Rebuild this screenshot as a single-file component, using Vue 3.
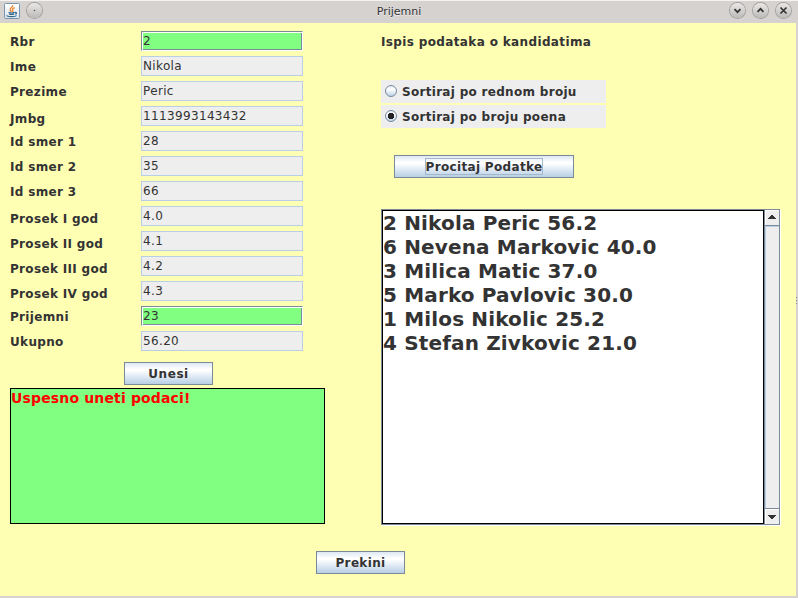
<script setup>
import { ref } from 'vue'

const fields = [
  { label: 'Rbr', value: '2', active: true },
  { label: 'Ime', value: 'Nikola' },
  { label: 'Prezime', value: 'Peric' },
  { label: 'Jmbg', value: '1113993143432', low: true },
  { label: 'Id smer 1', value: '28' },
  { label: 'Id smer 2', value: '35' },
  { label: 'Id smer 3', value: '66' },
  { label: 'Prosek I god', value: '4.0', low: true },
  { label: 'Prosek II god', value: '4.1', low: true },
  { label: 'Prosek III god', value: '4.2', low: true },
  { label: 'Prosek IV god', value: '4.3', low: true },
  { label: 'Prijemni', value: '23', active: true },
  { label: 'Ukupno', value: '56.20' },
]
const sorts = ['Sortiraj po rednom broju', 'Sortiraj po broju poena']
const selected = ref(1)
const candidates = [
  '2 Nikola Peric 56.2',
  '6 Nevena Markovic 40.0',
  '3 Milica Matic 37.0',
  '5 Marko Pavlovic 30.0',
  '1 Milos Nikolic 25.2',
  '4 Stefan Zivkovic 21.0',
]
</script>

<template>
  <div class="window">
    <header class="titlebar">
      <div class="side">
        <svg class="java" width="16" height="16" viewBox="0 0 16 16">
          <defs>
            <linearGradient id="jv" x1="0" y1="0" x2="0" y2="1">
              <stop offset="0" stop-color="#ffffff" />
              <stop offset="1" stop-color="#dce4ea" />
            </linearGradient>
          </defs>
          <rect x=".5" y=".5" width="15" height="15" rx="1" fill="url(#jv)" stroke="#7895ad" />
          <path d="M8.8 2.2C9.3 4 5.4 5 6.2 7c.3.8 1 1.2 1.3 2M10.8 4.6C8.8 5.4 8 6.3 8.7 7.2c.4.6.3 1-.2 1.7" fill="none" stroke="#e8832a" stroke-width="1.3" />
          <path d="M4.5 9.4c1.5.6 4.5.6 6.2 0M5.2 11.100c1.4.5 3.3.5 4.8 0M11 9.5c2-.6 2 1.2.2 1.7M3 12.300c-.8 1.7 8.5 1.7 9.5.2" fill="none" stroke="#35678f" stroke-width="1.2" />
        </svg>
        <span class="round"><svg width="15" height="15" viewBox="0 0 15 15"><circle cx="7.5" cy="7.5" r=".8" fill="#555" /></svg></span>
      </div>
      <span class="title">Prijemni</span>
      <div class="side right">
        <span class="round"><svg width="15" height="15" viewBox="0 0 15 15"><path d="M4.5 6.200l3 3 3-3" /></svg></span>
        <span class="round"><svg width="15" height="15" viewBox="0 0 15 15"><path d="M4.5 8.800l3-3 3 3" /></svg></span>
        <span class="round"><svg width="15" height="15" viewBox="0 0 15 15"><path d="M4.500 4.500l6 6M10.500 4.500l-6 6" /></svg></span>
      </div>
    </header>

    <div class="body">
      <main class="content">
        <div class="columns">
          <section class="form">
            <div v-for="f in fields" :key="f.label" class="row">
              <span class="label" :class="{ low: f.low }">{{ f.label }}</span>
              <div class="field" :class="{ active: f.active }"><span>{{ f.value }}</span></div>
            </div>
            <button class="btn unesi">Unesi</button>
            <div class="message">Uspesno uneti podaci!</div>
          </section>

          <section class="output">
            <div class="heading">Ispis podataka o kandidatima</div>
            <div class="radios">
              <div v-for="(s, i) in sorts" :key="s" class="radio" @click="selected = i">
                <svg width="12" height="12" viewBox="0 0 12 12">
                  <defs>
                    <linearGradient :id="'rg' + i" x1="0" y1="0" x2="0" y2="1">
                      <stop offset="0" stop-color="#dde8f3" />
                      <stop offset=".35" stop-color="#ffffff" />
                      <stop offset="1" stop-color="#b8cfe5" />
                    </linearGradient>
                  </defs>
                  <circle cx="6" cy="6" r="5.5" :fill="`url(#rg${i})`" stroke="#7a8a99" />
                  <path v-if="selected === i" d="M4 3h4v1h1v4h-1v1h-4v-1h-1v-4h1z" fill="#222" />
                </svg>
                <span class="caption">{{ s }}</span>
              </div>
            </div>
            <button class="btn read"><span>Procitaj Podatke</span></button>
            <div class="scrollpane">
              <div class="list">
                <div v-for="c in candidates" :key="c" class="item">{{ c }}</div>
              </div>
              <div class="scrollbar">
                <div class="arrow up"><svg width="8" height="4" viewBox="0 0 8 4" shape-rendering="crispEdges"><path d="M3 0h2v1h1v1h1v1h1v1h-8v-1h1v-1h1v-1h1z" fill="#333" /></svg></div>
                <div class="arrow down"><svg width="8" height="4" viewBox="0 0 8 4" shape-rendering="crispEdges"><path d="M0 0h8v1h-1v1h-1v1h-1v1h-2v-1h-1v-1h-1v-1h-1z" fill="#333" /></svg></div>
              </div>
            </div>
          </section>
        </div>
        <button class="btn prekini">Prekini</button>
      </main>
      <div class="grip"><i></i><i></i><i></i></div>
    </div>
  </div>
</template>

<style>
body { margin: 0; overflow: hidden; }
</style>

<style scoped>
.window { width: 798px; height: 598px; display: flex; flex-direction: column; box-sizing: border-box; background: #d6d2d0; border-bottom: 2px solid #d6d2d0; font: bold 12px "DejaVu Sans", sans-serif; color: #333; overflow: hidden; }
.titlebar { height: 23px; flex: none; box-sizing: border-box; border-top: 1px solid #f4f3f2; background: #d6d2d0; display: grid; grid-template-columns: 1fr auto 1fr; align-items: start; }
.side { display: flex; gap: 15px; padding: 2px 0 0 4px; }
.side .round { margin-left: -8px; }
.side.right { justify-content: flex-end; gap: 16px; padding: 2px 7px 0 0; }
.java { display: block; flex: none; }
.round { width: 15px; height: 15px; box-sizing: border-box; border-radius: 50%; background: linear-gradient(#e9e8e7, #bcbab9); box-shadow: 0 0 0 1px #a3a09e; display: block; flex: none; }
.round svg { display: block; }
.round path { fill: none; stroke: #333; stroke-width: 1.7; }
.title { font-weight: normal; font-size: 11px; line-height: 13px; margin-top: 4px; color: #333; text-shadow: 0 1px 0 #efeeed; }
.body { flex: 1; display: flex; min-height: 0; }
.content { width: 796px; background: #ffffb3; box-sizing: border-box; padding: 8px 15px 0 10px; display: flex; flex-direction: column; }
.columns { display: flex; gap: 56px; height: 520px; flex: none; }
.form { width: 315px; display: flex; flex-direction: column; }
.row { height: 20px; margin-bottom: 5px; display: flex; flex: none; }
.label { width: 131px; line-height: 20px; padding-top: 1px; letter-spacing: .33px; white-space: nowrap; }
.label.low { padding-top: 3px; }
.field { width: 162px; height: 20px; box-sizing: border-box; border: 1px solid #b8cfe5; background: #eee; font-weight: normal; line-height: 16px; padding: 1px; letter-spacing: .35px; white-space: nowrap; }
.field span { display: block; }
.field.active { border: 1px solid #7a8a99; border-right-color: #fff; border-bottom-color: #fff; background: #80ff80; box-shadow: inset 1px 1px 0 #fff, inset -1px -1px 0 #7a8a99; }
.btn { height: 23px; flex: none; box-sizing: border-box; border: 1px solid #7a8a99; border-radius: 0; padding: 1px 0 0; margin: 0; background: linear-gradient(#dde8f3, #fff 30%, #fff 35%, #b8cfe5); font: bold 12px/20px "DejaVu Sans", sans-serif; letter-spacing: .35px; color: #333; display: flex; justify-content: center; }
.unesi { width: 89px; margin: 6px 0 3px 114px; letter-spacing: .6px; }
.message { height: 136px; box-sizing: border-box; border: 1px solid #000; background: #80ff80; color: #f00; font-size: 14px; letter-spacing: .15px; line-height: 18px; white-space: nowrap; }
.output { width: 400px; display: flex; flex-direction: column; }
.heading { height: 20px; line-height: 20px; box-sizing: border-box; padding-top: 1px; letter-spacing: .36px; }
.radios { display: flex; flex-direction: column; gap: 2px; margin-top: 29px; }
.radio { width: 225px; height: 23px; box-sizing: border-box; background: #eee; display: flex; padding: 5px 0 0 4px; gap: 5px; }
.caption { line-height: 14px; letter-spacing: .3px; white-space: nowrap; }
.read { width: 180px; margin: 27px 0 0 13px; padding: 2px 0 0; align-items: flex-start; }
.read span { line-height: 14px; padding-top: 1px; border: 1px solid #a3b8cc; letter-spacing: .33px; white-space: nowrap; }
.scrollpane { margin-top: 31px; width: 399px; height: 316px; flex: none; box-sizing: border-box; border: 1px solid #7a8a99; box-shadow: 1px 1px 0 #fff; display: flex; }
.list { width: 382px; box-sizing: border-box; border: 1px solid #000; background: #fff; font-size: 20px; line-height: 24px; letter-spacing: .15px; }
.item { white-space: nowrap; }
.scrollbar { width: 15px; box-sizing: border-box; background: #eee; border-left: 1px solid #7a8a99; box-shadow: inset 1px 0 0 #b8cfe5; display: flex; flex-direction: column; justify-content: space-between; }
.arrow { height: 16px; box-sizing: border-box; display: flex; justify-content: center; background: #eee; }
.up { border-bottom: 1px solid #7a8a99; padding-top: 5px; box-shadow: inset 1px 1px 0 #fff, 0 1px 0 #b8cfe5; }
.down { border-top: 1px solid #7a8a99; padding-top: 6px; box-shadow: inset 1px 1px 0 #fff; }
.prekini { width: 89px; margin-left: 306px; }
.grip { width: 2px; display: flex; flex-direction: column; gap: 2px; padding-top: 274px; box-sizing: border-box; }
.grip i { height: 1px; width: 1px; background: #888; }
</style>
